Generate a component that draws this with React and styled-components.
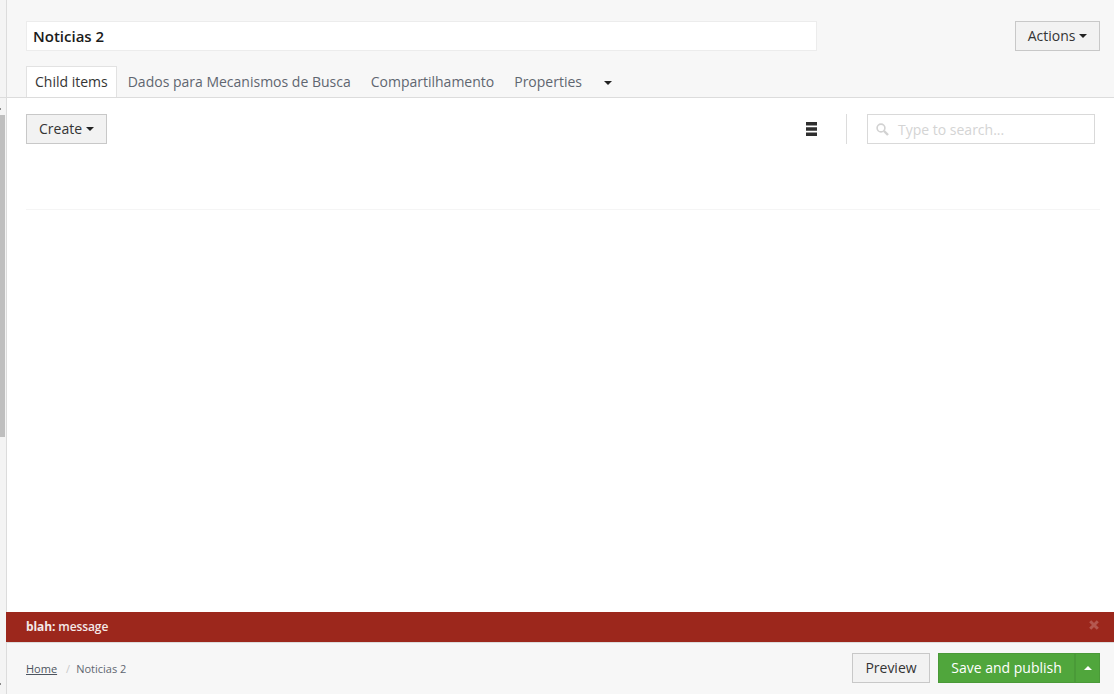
import React from 'react';
import styled, { createGlobalStyle } from 'styled-components';

const Global = createGlobalStyle`
  html, body { margin: 0; padding: 0; height: 100%; overflow: hidden; }
  #root { height: 100%; }
  * { box-sizing: border-box; }
  body {
    font-family: "Open Sans", "Noto Sans", sans-serif;
    font-size: 14px;
    color: #343434;
    background: #fff;
  }
`;

const Page = styled.div`
  display: flex;
  width: 1114px;
  height: 694px;
`;
const Rail = styled.div`
  width: 6px;
  flex: none;
  background: #f4f4f4;
  display: flex;
  flex-direction: column;
`;
const RailTop = styled.div`
  height: 98px;
  flex: none;
  border-bottom: 1px solid #dcdcdc;
`;
const RailDot = styled.div`
  width: 1px;
  height: 2px;
  flex: none;
  background: #8a8a8a;
  margin-top: ${({ $top }) => $top}px;
`;
const RailThumb = styled.div`
  width: 5px;
  height: 322px;
  flex: none;
  margin-top: 5px;
  background: #bfbfbf;
`;
const Main = styled.div`
  flex: 1;
  min-width: 0;
  display: flex;
  flex-direction: column;
`;
const Header = styled.div`
  height: 98px;
  flex: none;
  background: #f7f7f7;
  border-left: 1px solid #dcdcdc;
  border-bottom: 1px solid #dcdcdc;
  padding: 21px 14px 0 19px;
  display: flex;
  flex-direction: column;
  justify-content: space-between;
`;
const TitleRow = styled.div`
  display: flex;
  justify-content: space-between;
  align-items: flex-start;
`;
const TitleInput = styled.div`
  width: 791px;
  height: 30px;
  background: #fff;
  border: 1px solid #ececec;
  padding: 0 6px;
  font-size: 15px;
  font-weight: 600;
  line-height: 28px;
  color: #1b1b1b;
`;
const Button = styled.button`
  height: 30px;
  width: ${({ $w }) => ($w ? `${$w}px` : 'auto')};
  padding: 0 12px 2px;
  background: #f2f2f2;
  border: 1px solid #c8c8c8;
  border-radius: 0;
  font: inherit;
  color: #343434;
  display: inline-flex;
  align-items: center;
  justify-content: center;
  gap: 4px;
`;
const Caret = styled.span`
  width: 0;
  height: 0;
  margin-top: 2px;
  border-left: 4px solid transparent;
  border-right: 4px solid transparent;
  border-top: 4px solid #222;
  ${({ $up }) => $up && 'border-top: 0; border-bottom: 4px solid #fff;'}
`;
const TabBar = styled.div`
  display: flex;
  align-items: flex-end;
`;
const Tab = styled.div`
  height: 31px;
  line-height: 29px;
  padding: 0 ${({ $active }) => ($active ? '8px' : '9px')};
  margin-right: ${({ $active }) => ($active ? '1px' : '0')};
  color: ${({ $active }) => ($active ? '#343434' : '#5f6670')};
  background: ${({ $active }) => ($active ? '#fff' : 'transparent')};
  border: 1px solid ${({ $active }) => ($active ? '#e2e2e2' : 'transparent')};
  border-bottom: 0;
`;
const MoreTab = styled.div`
  height: 31px;
  width: 32px;
  display: flex;
  align-items: center;
  justify-content: center;
`;
const Body = styled.div`
  flex: 1;
  min-height: 0;
  background: #fff;
  border-left: 1px solid #dcdcdc;
  padding: 16px 14px 0 19px;
`;
const Toolbar = styled.div`
  display: flex;
  align-items: stretch;
  height: 30px;
`;
const Spacer = styled.div`
  flex: 1;
`;
const ListIcon = styled.svg`
  width: 11px;
  height: 14px;
  align-self: center;
`;
const Divider = styled.div`
  width: 1px;
  background: #dcdcdc;
  margin: 0 20px 0 29px;
`;
const Search = styled.div`
  width: 228px;
  margin-right: 5px;
  border: 1px solid #d9d9d9;
  display: flex;
  align-items: center;
  gap: 9px;
  padding: 0 8px;
  color: #d4d4d4;
`;
const SearchGlyph = styled.svg`
  width: 13px;
  height: 13px;
  flex: none;
`;
const RowLine = styled.div`
  height: 1px;
  margin-top: 65px;
  background: #f5f5f5;
`;
const Alert = styled.div`
  height: 30px;
  flex: none;
  background: #9c271c;
  color: #f4e9e8;
  font-size: 12px;
  font-weight: 600;
  line-height: 29px;
  padding: 0 6px 0 20px;
  display: flex;
  justify-content: space-between;
`;
const AlertText = styled.span`
  letter-spacing: -0.1px;
`;
const AlertKey = styled.b`
  font-weight: 700;
`;
const Close = styled.svg`
  width: 10px;
  height: 10px;
  margin: 8px 9px 0 0;
`;
const Footer = styled.div`
  height: 52px;
  flex: none;
  background: #f7f7f7;
  border-left: 1px solid #dcdcdc;
  border-top: 1px solid #dcdcdc;
  padding: 10px 14px 0 19px;
  display: flex;
  justify-content: space-between;
`;
const Crumbs = styled.div`
  font-size: 11px;
  line-height: 31px;
  color: #5f6670;
  display: flex;
`;
const Crumb = styled.a`
  color: #4d5560;
  text-decoration: underline;
`;
const Slash = styled.span`
  color: #c9c9c9;
  margin: 0 6px 0 9px;
`;
const Actions = styled.div`
  display: flex;
  gap: 8px;
`;
const SplitGroup = styled.div`
  display: flex;
`;
const Publish = styled(Button)`
  background: #50a63c;
  border: 1px solid #4a9a38;
  color: #fff;
  padding: 0 0 2px;
`;

export default function App() {
  return (
    <Page>
      <Global />
      <Rail>
        <RailTop />
        <RailDot $top={10} />
        <RailThumb />
        <RailDot $top={246} />
      </Rail>
      <Main>
        <Header>
          <TitleRow>
            <TitleInput>Noticias 2</TitleInput>
            <Button $w={85}>Actions <Caret /></Button>
          </TitleRow>
          <TabBar>
            <Tab $active>Child items</Tab>
            <Tab>Dados para Mecanismos de Busca</Tab>
            <Tab>Compartilhamento</Tab>
            <Tab>Properties</Tab>
            <MoreTab><Caret /></MoreTab>
          </TabBar>
        </Header>
        <Body>
          <Toolbar>
            <Button>Create <Caret /></Button>
            <Spacer />
            <ListIcon viewBox="0 0 11 14">
              <path d="M0 0h11v3.6H0zM0 5.2h11v3.6H0zM0 10.4h11V14H0z" fill="#2e2e2e" />
            </ListIcon>
            <Divider />
            <Search>
              <SearchGlyph viewBox="0 0 13 13" fill="none">
                <circle cx="5" cy="5" r="3.9" stroke="#d2d2d2" strokeWidth="1.6" />
                <path d="M8 8l4 4" stroke="#d2d2d2" strokeWidth="2.4" />
              </SearchGlyph>
              Type to search...
            </Search>
          </Toolbar>
          <RowLine />
        </Body>
        <Alert>
          <AlertText><AlertKey>blah:</AlertKey> message</AlertText>
          <Close viewBox="0 0 10 10">
            <path d="M1.2 1.2l7.6 7.6M8.8 1.2L1.2 8.8" stroke="#b4574f" strokeWidth="3" />
          </Close>
        </Alert>
        <Footer>
          <Crumbs>
            <Crumb>Home</Crumb>
            <Slash>/</Slash>
            <span>Noticias 2</span>
          </Crumbs>
          <Actions>
            <Button $w={78}>Preview</Button>
            <SplitGroup>
              <Publish $w={137}>Save and publish</Publish>
              <Publish $w={25}><Caret $up /></Publish>
            </SplitGroup>
          </Actions>
        </Footer>
      </Main>
    </Page>
  );
}
